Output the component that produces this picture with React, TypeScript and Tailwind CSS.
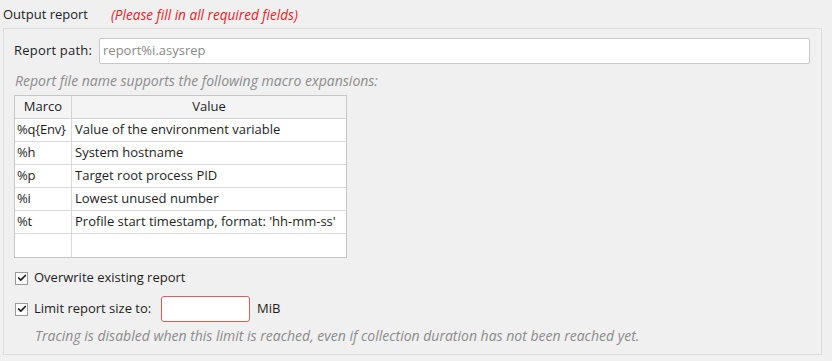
import { Check } from 'lucide-react'

const macros = [
  ['%q{Env}', 'Value of the environment variable'],
  ['%h', 'System hostname'],
  ['%p', 'Target root process PID'],
  ['%i', 'Lowest unused number'],
  ['%t', "Profile start timestamp, format: 'hh-mm-ss'"],
  ['', ''],
]

function CheckBox() {
  return (
    <span className="w-[13px] h-[13px] border border-[#9a9a9a] bg-white flex items-center justify-center shrink-0">
      <Check size={10} strokeWidth={4} className="text-[#1a1a1a]" />
    </span>
  )
}

export default function App() {
  return (
    <div
      className="w-[832px] h-[361px] bg-[#f0f0f0] text-[13px] text-[#1e1e1e] overflow-hidden"
      style={{ fontFamily: '"Open Sans", "Noto Sans", sans-serif' }}
    >
      {/* group title */}
      <div className="flex items-center h-[28px] pl-[3px] pt-[2px]">
        <span>Output report</span>
        <span className="ml-[23px] italic text-[13.6px] text-[#e8232a]">(Please fill in all required fields)</span>
      </div>

      {/* group box */}
      <div className="ml-[3px] w-[819px] h-[327px] border border-[#dcdcdc] pl-[10px] pr-[11px] pt-[9px]">
        <div className="flex items-center gap-[7px]">
          <span className="tracking-[0.2px]">Report path:</span>
          <div className="flex-1 h-[26px] bg-white border border-[#c8c8c8] rounded-[2px] flex items-center px-[3px] text-[#8a8a8a]">
            report%i.asysrep
          </div>
        </div>

        <div className="italic text-[14px] text-[#8c8c8c] mt-[5px] h-[22px] flex items-center pl-[1px]">
          Report file name supports the following macro expansions:
        </div>

        <div className="mt-[4px] w-[333px] border border-[#c6c6c6] bg-white">
          <div className="flex h-[23px] bg-[#f4f4f4] border-b border-[#d4d4d4]">
            <div className="w-[57px] border-r border-[#d4d4d4] flex items-center justify-center">Marco</div>
            <div className="flex-1 flex items-center justify-center">Value</div>
          </div>
          {macros.map(([m, v], i) => (
            <div key={i} className={`flex h-[23px] ${i < macros.length - 1 ? 'border-b border-[#d9d9d9]' : ''}`}>
              <div className="w-[57px] border-r border-[#d9d9d9] flex items-center pl-[2px] whitespace-nowrap tracking-[-0.2px]">{m}</div>
              <div className="flex-1 flex items-center pl-[3px] whitespace-nowrap">{v}</div>
            </div>
          ))}
        </div>

        <div className="flex items-center gap-[6px] mt-[11px] h-[18px] pl-[1px]">
          <CheckBox />
          <span>Overwrite existing report</span>
        </div>

        <div className="flex items-center gap-[6px] mt-[9px] h-[26px] pl-[1px]">
          <CheckBox />
          <span className="w-[121px]">Limit report size to:</span>
          <div className="w-[89px] h-[26px] bg-white border border-[#e05a5a] rounded-[3px]" />
          <span className="ml-[1px]">MiB</span>
        </div>

        <div className="italic text-[14px] text-[#8c8c8c] mt-[3px] pl-[21px]">
          Tracing is disabled when this limit is reached, even if collection duration has not been reached yet.
        </div>
      </div>
    </div>
  )
}
